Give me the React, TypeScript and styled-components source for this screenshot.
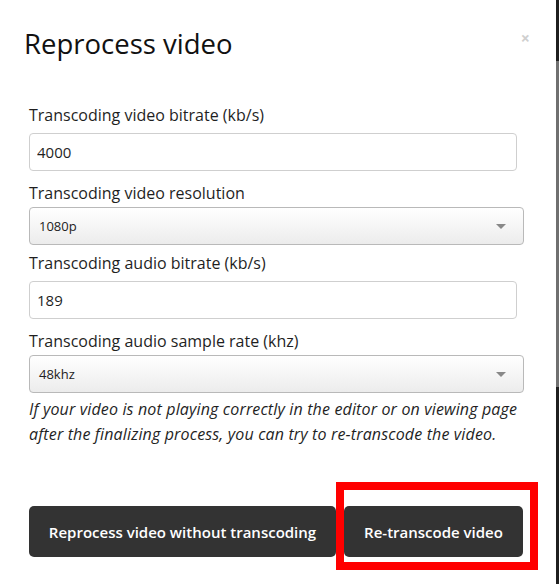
import React from 'react';
import styled, { createGlobalStyle } from 'styled-components';

const GlobalStyle = createGlobalStyle`
  html, body {
    margin: 0;
    padding: 0;
    background: #1f1f1f;
  }
  body {
    font-family: 'Open Sans', 'Noto Sans', sans-serif;
    color: #1f1f1f;
  }
`;

const Page = styled.div`
  display: flex;
  width: 559px;
  height: 584px;
  overflow: hidden;
`;

const Modal = styled.div`
  width: 556px;
  height: 584px;
  background: #fff;
  display: flex;
  flex-direction: column;
`;

const Scroll = styled.div`
  width: 3px;
  display: flex;
  flex-direction: column;
`;

const ScrollPart = styled.div<{ $h: number; $c: string }>`
  height: ${p => p.$h}px;
  background: ${p => p.$c};
`;

const Header = styled.div`
  display: flex;
  justify-content: space-between;
  align-items: flex-start;
  padding: 26px 26px 0 24px;
  height: 78px;
  box-sizing: border-box;
`;

const Title = styled.h1`
  margin: 0;
  font-size: 27.5px;
  font-weight: 400;
  line-height: 36px;
  color: #111;
`;

const Close = styled.span`
  margin-top: 5px;
  font-size: 16px;
  font-weight: 700;
  line-height: 14px;
  color: #cfcfcf;
  cursor: pointer;
`;

const Body = styled.div`
  padding: 27px 0 0 29px;
  width: 500px;
  display: flex;
  flex-direction: column;
`;

const Label = styled.label<{ $tight?: boolean }>`
  display: block;
  font-size: 16px;
  line-height: 20px;
  color: #1f1f1f;
  margin-bottom: ${p => (p.$tight ? 4 : 8)}px;
`;

const Input = styled.input`
  box-sizing: border-box;
  width: 488px;
  height: 38px;
  border: 1px solid #cfcfcf;
  border-radius: 4px;
  padding: 0 7px;
  font-family: inherit;
  font-size: 15px;
  color: #1f1f1f;
  margin-bottom: 12px;
  outline: none;
`;

const Select = styled.div`
  box-sizing: border-box;
  width: 495px;
  height: 38px;
  border: 1px solid #b9b9b9;
  border-radius: 4px;
  padding: 0 17px 0 9px;
  display: flex;
  align-items: center;
  justify-content: space-between;
  background: linear-gradient(#ffffff, #ececec);
  font-size: 13px;
  color: #222;
  margin-bottom: 8px;
`;

const Arrow = styled.span`
  width: 0;
  height: 0;
  border-left: 5px solid transparent;
  border-right: 5px solid transparent;
  border-top: 5px solid #888;
`;

const Note = styled.p`
  margin: -4px 0 0;
  font-size: 16px;
  font-style: italic;
  line-height: 25px;
  color: #1f1f1f;
  letter-spacing: 0.15px;
`;

const Footer = styled.div`
  display: flex;
  gap: 8px;
  margin-top: auto;
  padding: 0 0 27px 29px;
`;

const Button = styled.button<{ $w: number }>`
  width: ${p => p.$w}px;
  height: 51px;
  border: none;
  border-radius: 5px;
  background: #333;
  color: #fff;
  font-family: inherit;
  font-size: 15px;
  font-weight: 600;
  cursor: pointer;
`;

const Highlight = styled.div`
  position: relative;
`;

const RedBox = styled.div`
  position: absolute;
  top: -24px;
  left: -8px;
  right: -15px;
  bottom: -13px;
  border: 8px solid #ff0000;
  pointer-events: none;
`;

export default function App() {
  return (
    <>
      <GlobalStyle />
      <Page>
        <Modal>
          <Header>
            <Title>Reprocess video</Title>
            <Close>×</Close>
          </Header>
          <Body>
            <Label>Transcoding video bitrate (kb/s)</Label>
            <Input defaultValue="4000" />
            <Label $tight>Transcoding video resolution</Label>
            <Select>
              <span>1080p</span>
              <Arrow />
            </Select>
            <Label>Transcoding audio bitrate (kb/s)</Label>
            <Input defaultValue="189" />
            <Label $tight>Transcoding audio sample rate (khz)</Label>
            <Select>
              <span>48khz</span>
              <Arrow />
            </Select>
            <Note>
              If your video is not playing correctly in the editor or on viewing page after the finalizing process, you
              can try to re-transcode the video.
            </Note>
          </Body>
          <Footer>
            <Button $w={307}>Reprocess video without transcoding</Button>
            <Highlight>
              <Button $w={179}>Re-transcode video</Button>
              <RedBox />
            </Highlight>
          </Footer>
        </Modal>
        <Scroll>
          <ScrollPart $h={61} $c="#1f1f1f" />
          <ScrollPart $h={326} $c="#707070" />
          <ScrollPart $h={197} $c="#1f1f1f" />
        </Scroll>
      </Page>
    </>
  );
}
